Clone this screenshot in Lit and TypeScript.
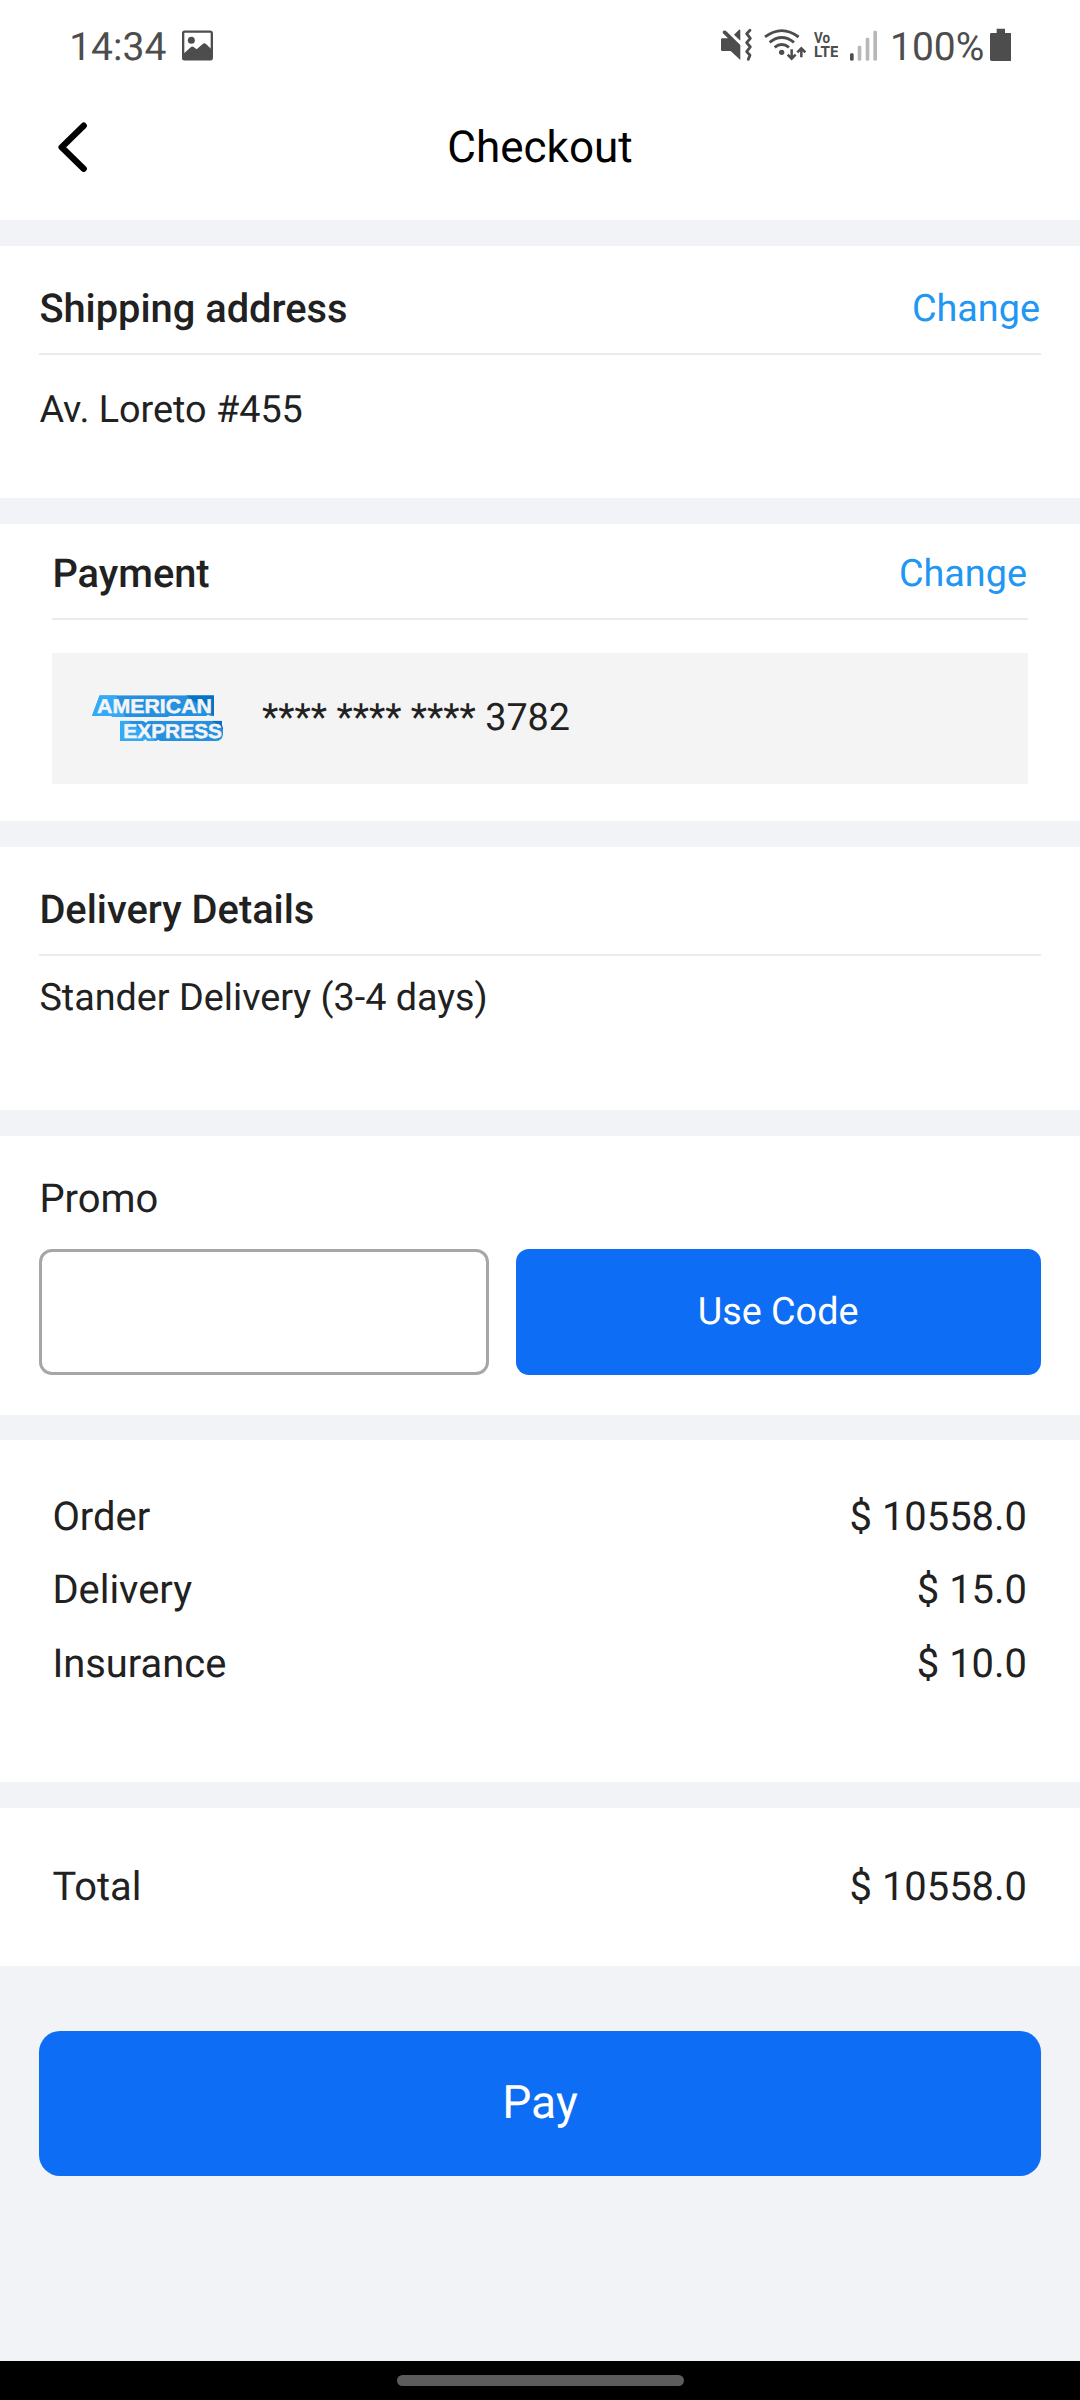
import { LitElement, html, css, svg } from "lit";
import { customElement, property } from "lit/decorators.js";

@customElement("status-bar")
class StatusBar extends LitElement {
  static styles = css`
    :host {
      display: flex;
      align-items: center;
      height: 90px;
      box-sizing: border-box;
      padding: 0 68.6px 0 69.2px;
      color: #4d4d4d;
      font-size: 39px;
      line-height: 46px;
    }
    .label {
      padding-top: 4px;
      white-space: nowrap;
    }
    .picture {
      width: 31px;
      margin-left: 15.6px;
    }
    .spacer {
      flex: 1;
    }
    .mute {
      width: 31.67px;
    }
    .wifi {
      width: 42.33px;
      margin-left: 11.3px;
    }
    .volte {
      width: 24.67px;
      margin-left: 7.6px;
    }
    .signal {
      width: 27.33px;
      margin-left: 11.3px;
    }
    .percent {
      margin-left: 13px;
    }
    .battery {
      width: 21.67px;
      margin-left: 5.4px;
    }
    svg {
      display: block;
      height: 36.67px;
      flex: none;
    }
    .carrier {
      font-family: Roboto, sans-serif;
      font-weight: 700;
    }
  `;

  render() {
    return html`
      <span class="label">14:34</span>
      <svg class="picture" viewBox="546 80 93 110">
        <rect x="549.5" y="94" width="86" height="83" rx="4" fill="none" stroke="#4d4d4d" stroke-width="7" />
        <circle cx="574" cy="120" r="10.5" fill="#4d4d4d" />
        <path d="M549 162 L573 140 Q577 137 581 140 L590 147 L608 131 Q613 127 618 131 L636 148 V177 H549 Z" fill="#4d4d4d" />
      </svg>
      <span class="spacer"></span>
      <svg class="mute" viewBox="62 80 95 110">
        <g fill="#4d4d4d">
          <path d="M66 114 H83 L68 99 Q65 94 69 91 Q74 89 78 93 L120 134 V179 L91 152 H66 Q62 152 62 148 V118 Q62 114 66 114 Z" />
          <path d="M101 103 L116 88 Q120 86 120 91 V121 Z" />
        </g>
        <path
          d="M149 90 L139 100 L150 114 L139 127 L150 140 L139 154 L149 165 L144 177"
          fill="none" stroke="#4d4d4d" stroke-width="8.500" stroke-linecap="round" stroke-linejoin="round" />
      </svg>
      <svg class="wifi" viewBox="191 80 127 110">
        <g fill="none" stroke="#4d4d4d" stroke-width="8.500">
          <path d="M194 110 Q244 72 295 110" />
          <path d="M208 126 Q244 97 281 126" />
          <path d="M223 141 Q244 124 266 141" />
        </g>
        <circle cx="244" cy="156" r="8" fill="#4d4d4d" />
        <g fill="none" stroke="#4d4d4d" stroke-width="7.500">
          <path d="M274 147 V176 M262 163 L274 175 L286 163" />
          <path d="M303 171 V142 M291 156 L303 144 L315 156" />
        </g>
      </svg>
      <svg class="volte" viewBox="340 80 74 110">
        <g class="carrier" fill="#4d4d4d" font-size="46">
          <text x="340" y="129" textLength="48" lengthAdjust="spacingAndGlyphs">Vo</text>
          <text x="340" y="171" textLength="74" lengthAdjust="spacingAndGlyphs">LTE</text>
        </g>
      </svg>
      <svg class="signal" viewBox="447 80 82 110">
        <rect x="447" y="159" width="11" height="22" rx="4" fill="#4d4d4d" />
        <g fill="#b8b8b8">
          <rect x="470" y="136" width="11" height="45" rx="4" />
          <rect x="494" y="112" width="11" height="69" rx="4" />
          <rect x="517" y="91" width="11" height="90" rx="4" />
        </g>
      </svg>
      <span class="label percent">100%</span>
      <svg class="battery" viewBox="869 80 65 110">
        <path
          d="M889 85 H914 V98 H930 Q934 98 934 102 V177 Q934 182 929 182 H874 Q869 182 869 177 V102 Q869 98 873 98 H889 Z"
          fill="#4d4d4d" />
      </svg>
    `;
  }
}

@customElement("amex-logo")
class AmexLogo extends LitElement {
  static styles = css`
    :host {
      display: block;
      width: 144px;
      height: 60px;
      margin-bottom: 1px;
    }
    svg {
      display: block;
      width: 144px;
      height: 60px;
    }
    .name {
      font-family: "Liberation Sans", Arial, sans-serif;
      font-weight: 700;
      font-size: 60px;
    }
  `;

  render() {
    const top = svg`<path d="M18 84 L41 22 H384 V84 H374 L366 80 L360 84 H250 L246 87 H80 L76 84 Z" />`;
    const bottom = svg`<path d="M102 98 H170 L180 104 L188 98 H408 L408 112 L411 122 V140 Q408 159 388 159 H222 L217 155 L210 159 H185 L178 153 L170 159 H102 Z" />`;
    return html`
      <svg viewBox="0 0 432 180">
        <defs>
          <clipPath id="top">${top}</clipPath>
          <clipPath id="bottom">${bottom}</clipPath>
        </defs>
        <g clip-path="url(#top)">
          <rect width="432" height="90" fill="#258fe0" />
          <path d="M0 0 H80 L120 90 H0 Z" fill="#33a9f8" />
          <path d="M298 20 L384 84 V20 Z" fill="#0672c4" />
        </g>
        <g clip-path="url(#bottom)">
          <rect y="90" width="432" height="90" fill="#258fe0" />
          <path d="M100 96 H122 L212 160 H100 Z" fill="#33a9f8" />
          <path d="M375 96 H412 V125 Z" fill="#0672c4" />
        </g>
        <g class="name" fill="#f4f4f4" stroke="#f4f4f4" stroke-width="1.500">
          <text x="33" y="76" textLength="345" lengthAdjust="spacingAndGlyphs">AMERICAN</text>
          <text x="112" y="150.500" textLength="296" lengthAdjust="spacingAndGlyphs">EXPRESS</text>
        </g>
      </svg>
    `;
  }
}

@customElement("amount-row")
class AmountRow extends LitElement {
  @property() label = "";
  @property() amount = "";

  static styles = css`
    :host {
      display: flex;
      justify-content: space-between;
      align-items: center;
      height: 73.5px;
      padding-right: 0.7px;
      font-size: 39.9px;
    }
  `;

  render() {
    return html`<span>${this.label}</span><span>${this.amount}</span>`;
  }
}

@customElement("app-root")
class AppRoot extends LitElement {
  static styles = css`
    :host {
      display: flex;
      flex-direction: column;
      width: 1080px;
      height: 2400px;
      overflow: hidden;
      background: #f2f3f7;
      color: #212121;
      font-family: Roboto, "Liberation Sans", sans-serif;
      text-rendering: geometricPrecision;
    }
    .top {
      flex: none;
      height: 220px;
      background: #fff;
    }
    .header {
      display: grid;
      grid-template-columns: 1fr auto 1fr;
      align-items: center;
      height: 113px;
      padding: 0 58px;
      color: #000;
    }
    .back {
      width: 29px;
      height: 50px;
      display: block;
    }
    .title {
      font-size: 44px;
      line-height: 52px;
    }
    .section {
      flex: none;
      box-sizing: border-box;
      background: #fff;
      margin-top: 26px;
      padding: 0 39.4px;
    }
    .inset {
      padding: 0 52.4px;
    }
    .shipping {
      height: 252px;
    }
    .payment {
      height: 297px;
    }
    .delivery {
      height: 263px;
    }
    .promo {
      height: 279px;
      padding-top: 40px;
    }
    .summary {
      height: 342px;
      margin-top: 25px;
      padding-top: 39.3px;
    }
    .total {
      height: 158px;
      padding-top: 42px;
    }
    .heading {
      display: flex;
      justify-content: space-between;
      align-items: center;
      box-sizing: border-box;
      height: 109px;
      padding-top: 18px;
      padding-right: 0.7px;
      border-bottom: 2px solid #ebebeb;
    }
    .payment .heading {
      height: 96px;
      padding-top: 5px;
    }
    .name {
      font-size: 39.8px;
      font-weight: 500;
      line-height: 46px;
    }
    .link {
      color: #2196f3;
    }
    .body {
      font-size: 37.75px;
      line-height: 44px;
    }
    .address {
      padding-top: 32.6px;
    }
    .method {
      padding-top: 19.6px;
    }
    .card {
      display: flex;
      align-items: center;
      height: 131px;
      margin-top: 33px;
      padding-left: 33.6px;
      background: #f4f4f4;
    }
    .digits {
      margin-left: 32px;
      padding-bottom: 2px;
    }
    .caption {
      font-size: 39.9px;
      line-height: 46px;
    }
    .form {
      display: flex;
      gap: 26.2px;
      margin-top: 27px;
    }
    .field {
      width: 450px;
      height: 126px;
      box-sizing: border-box;
      border: 3px solid #a6a6a6;
      border-radius: 13px;
      background: #fff;
    }
    .button {
      flex: 1;
      display: flex;
      align-items: center;
      justify-content: center;
      background: #0d6df4;
      color: #fff;
      border-radius: 13px;
    }
    .pay {
      flex: none;
      height: 144.6px;
      margin: 65.2px 39.4px 0;
      border-radius: 21px;
      font-size: 46.2px;
      line-height: 56px;
    }
    .nav {
      flex: none;
      display: flex;
      align-items: center;
      justify-content: center;
      height: 39px;
      margin-top: auto;
      background: #000;
    }
    .handle {
      width: 287px;
      height: 11px;
      border-radius: 5.5px;
      background: #5c5c5c;
    }
  `;

  render() {
    return html`
      <div class="top">
        <status-bar></status-bar>
        <div class="header">
          <svg class="back" viewBox="174 364 87 150">
            <path d="M251 375 L185 439.500 L251 504" fill="none" stroke="#000" stroke-width="19"
              stroke-linecap="round" stroke-linejoin="round" />
          </svg>
          <span class="title">Checkout</span>
        </div>
      </div>

      <div class="section shipping">
        <div class="heading">
          <span class="name">Shipping address</span>
          <span class="body link">Change</span>
        </div>
        <div class="body address">Av. Loreto #455</div>
      </div>

      <div class="section inset payment">
        <div class="heading">
          <span class="name">Payment</span>
          <span class="body link">Change</span>
        </div>
        <div class="card">
          <amex-logo></amex-logo>
          <span class="body digits">**** **** **** 3782</span>
        </div>
      </div>

      <div class="section delivery">
        <div class="heading"><span class="name">Delivery Details</span></div>
        <div class="body method">Stander Delivery (3-4 days)</div>
      </div>

      <div class="section promo">
        <div class="caption">Promo</div>
        <div class="form">
          <div class="field"></div>
          <div class="button body">Use Code</div>
        </div>
      </div>

      <div class="section inset summary">
        <amount-row label="Order" amount="$ 10558.0"></amount-row>
        <amount-row label="Delivery" amount="$ 15.0"></amount-row>
        <amount-row label="Insurance" amount="$ 10.0"></amount-row>
      </div>

      <div class="section inset total">
        <amount-row label="Total" amount="$ 10558.0"></amount-row>
      </div>

      <div class="button pay">Pay</div>

      <div class="nav"><div class="handle"></div></div>
    `;
  }
}
